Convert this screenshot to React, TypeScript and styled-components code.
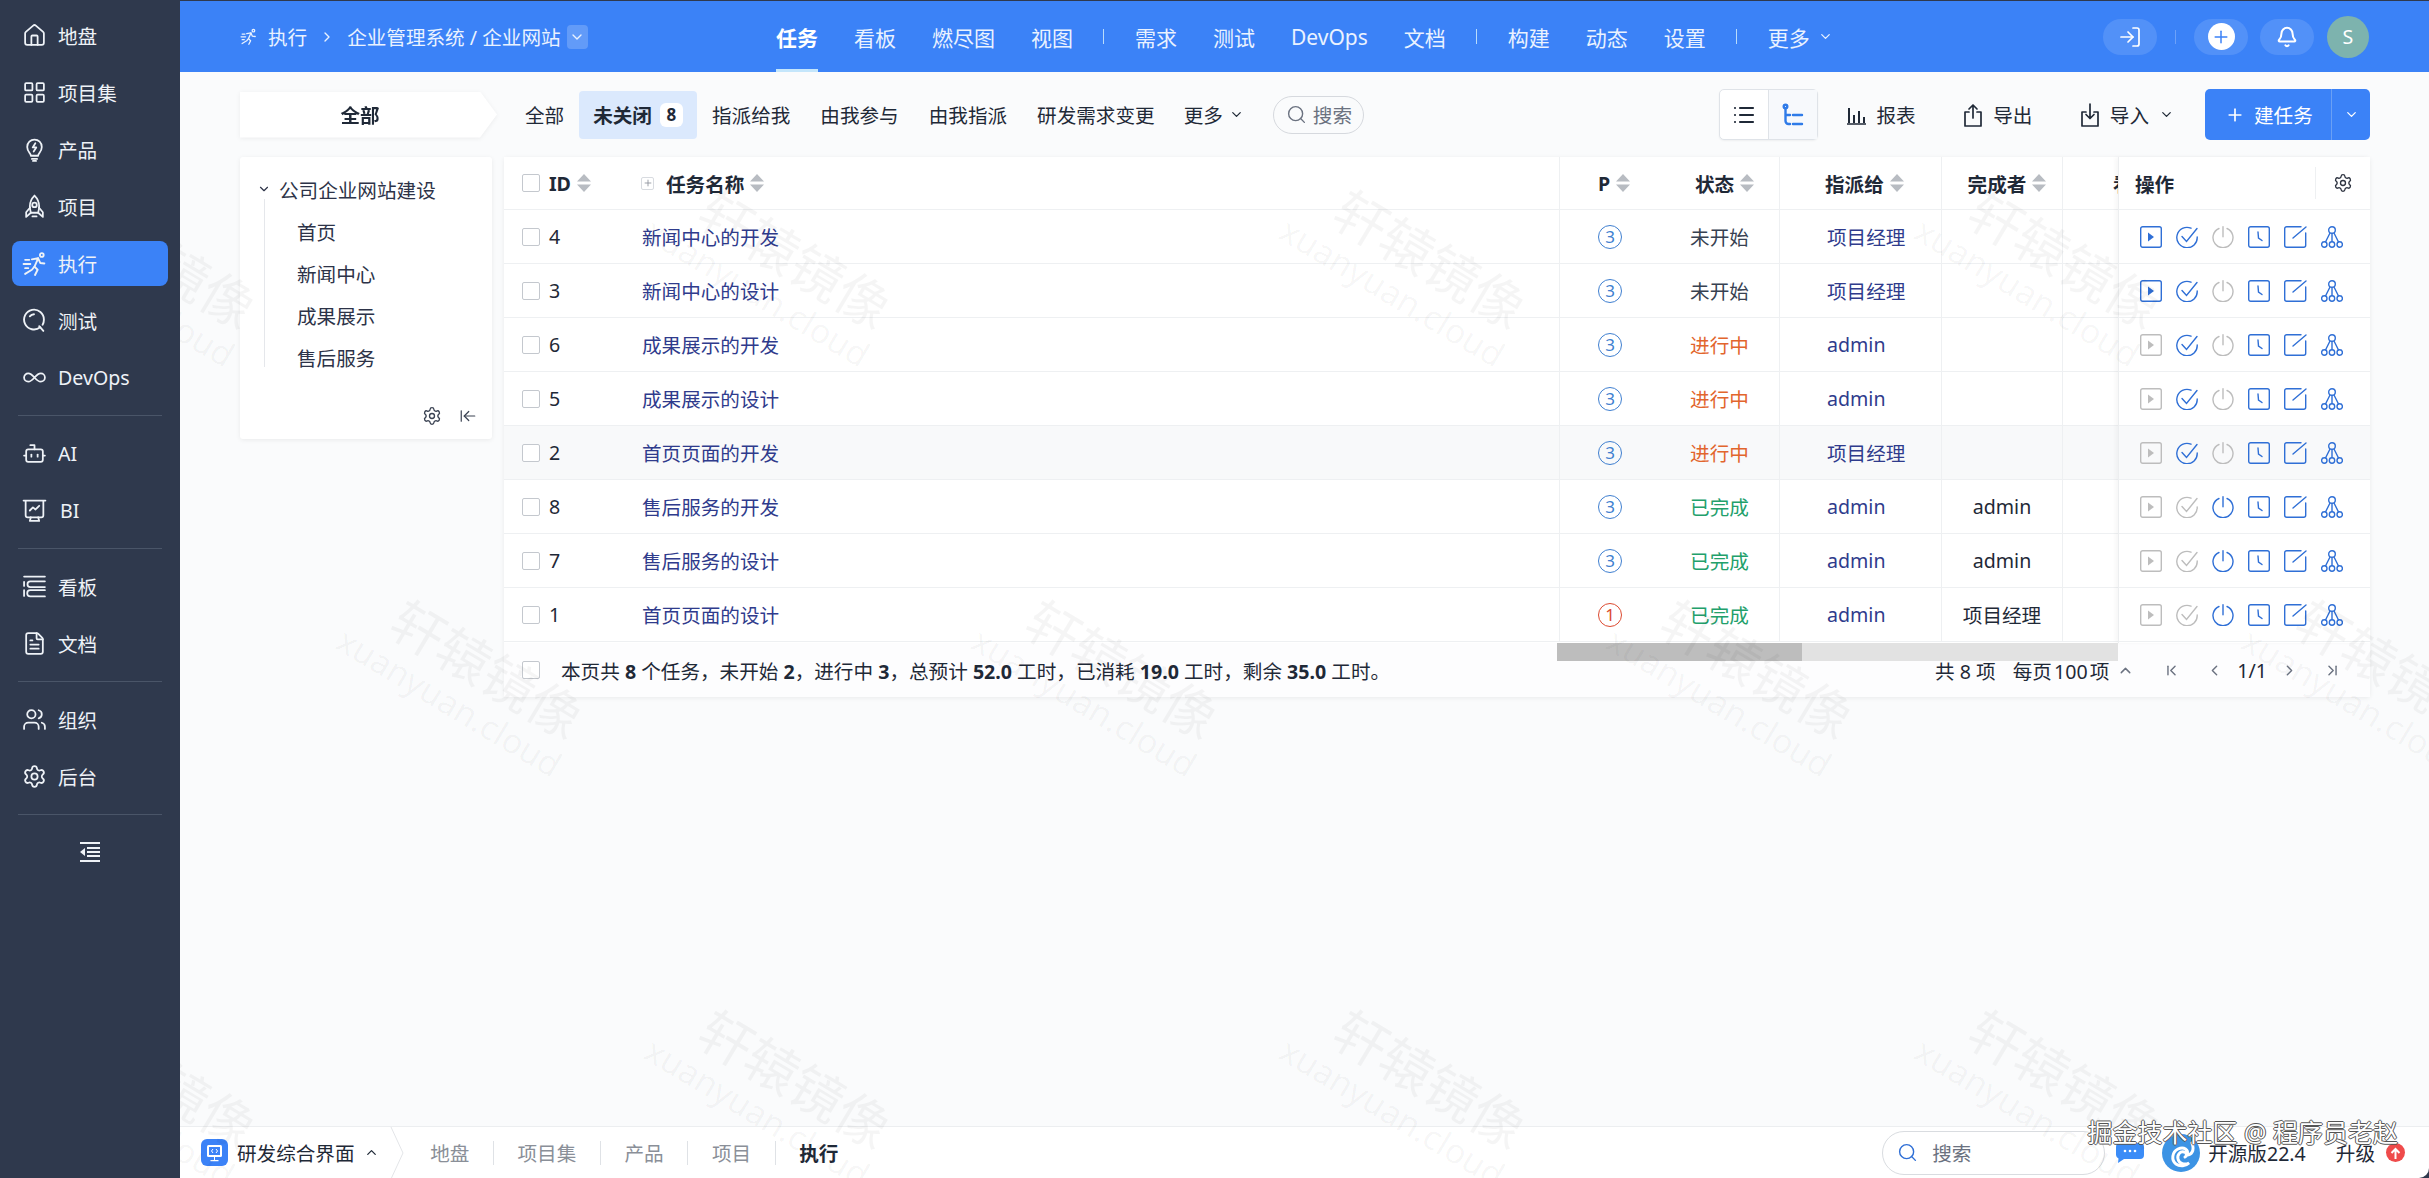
import React from "react";
import styled, { createGlobalStyle } from "styled-components";
import {
  House,
  LayoutGrid,
  Search,
  Infinity as InfinityIcon,
  Bot,
  FileText,
  Users,
  Settings,
  ChevronDown,
  ChevronUp,
  ChevronRight,
  ChevronLeft,
  ChevronFirst,
  ChevronLast,
  Bell,
  LogIn,
  Plus,
  List,
  ArrowLeftToLine,
} from "lucide-react";

const GlobalStyle = createGlobalStyle`
  html, body {
    margin: 0;
    padding: 0;
    background: #2f394d;
  }
  body {
    font-family: "Noto Sans", "Noto Sans CJK SC", sans-serif;
    font-size: 19.6px;
    color: #1f2937;
  }
  * {
    box-sizing: border-box;
  }
`;

const Shell = styled.div`
  display: flex;
  width: 2429px;
  height: 1178px;
  background: #2f394d;
  overflow: hidden;
`;

/* 左侧菜单 */
const Sidebar = styled.nav`
  width: 180px;
  flex: none;
  display: flex;
  flex-direction: column;
  gap: 12px;
  padding: 13px 12px 0;
`;

const MenuItem = styled.div<{ $active?: boolean; $wide?: boolean }>`
  height: 45px;
  display: flex;
  align-items: center;
  gap: ${(p) => (p.$wide ? "13px" : "11px")};
  padding-left: 10px;
  border-radius: 8px;
  color: #eef2f7;
  background: ${(p) => (p.$active ? "#3b82f7" : "transparent")};
  svg {
    flex: none;
  }
`;

const MenuDivider = styled.div`
  height: 1px;
  margin: 3px 6px;
  background: #4a5568;
`;

const Collapse = styled.div`
  height: 36px;
  margin-top: 4px;
  display: flex;
  align-items: center;
  justify-content: center;
  color: #eef2f7;
`;

const Main = styled.div`
  flex: 1;
  min-width: 0;
  display: flex;
  flex-direction: column;
`;

/* 顶部导航 */
const Header = styled.header`
  height: 72px;
  flex: none;
  display: flex;
  align-items: center;
  padding: 0 60px;
  background: #3b82f7;
  border-top: 1px solid #2f394d;
  color: #eaf2ff;
`;

const Crumb = styled.div`
  display: flex;
  align-items: center;
  width: 348px;
  flex: none;
`;

const CrumbText = styled.span<{ $gap: number }>`
  display: flex;
  margin-left: ${(p) => p.$gap}px;
  white-space: nowrap;
`;

const CrumbDrop = styled.span`
  width: 24px;
  height: 24px;
  margin-left: 6px;
  display: flex;
  align-items: center;
  justify-content: center;
  border-radius: 4px;
  background: rgba(255, 255, 255, 0.2);
`;

const Nav = styled.div`
  margin-left: 170px;
  height: 71px;
  display: flex;
  align-items: center;
  font-size: 21px;
`;

const NavItem = styled.div<{ $active?: boolean }>`
  position: relative;
  height: 100%;
  display: flex;
  align-items: center;
  gap: 8px;
  padding: 0 18px;
  white-space: nowrap;
  color: ${(p) => (p.$active ? "#fff" : "#eaf2ff")};
  font-weight: ${(p) => (p.$active ? 700 : 400)};
  &::after {
    content: "";
    display: ${(p) => (p.$active ? "block" : "none")};
    position: absolute;
    left: 18px;
    right: 18px;
    bottom: 0;
    height: 3px;
    background: #c4e6fb;
  }
`;

const NavSep = styled.span`
  width: 1px;
  height: 15px;
  margin: 0 13px 0 12px;
  background: #b9dcfb;
`;

const HeaderRight = styled.div`
  margin-left: auto;
  display: flex;
  align-items: center;
`;

const HeadPill = styled.div`
  width: 54px;
  height: 36px;
  display: flex;
  align-items: center;
  justify-content: center;
  border-radius: 18px;
  background: rgba(255, 255, 255, 0.12);
  color: #fff;
  & + & {
    margin-left: 12px;
  }
`;

const HeadSep = styled.span`
  width: 1px;
  height: 14px;
  margin: 0 18px;
  background: rgba(255, 255, 255, 0.25);
`;

const PlusDot = styled.span`
  width: 27px;
  height: 27px;
  border-radius: 50%;
  display: flex;
  align-items: center;
  justify-content: center;
  background: #fff;
  color: #3b82f7;
`;

const Avatar = styled.div`
  width: 42px;
  height: 42px;
  margin-left: 13px;
  border-radius: 50%;
  display: flex;
  align-items: center;
  justify-content: center;
  background: #7db3ae;
  color: #fff;
`;

const Workspace = styled.div`
  position: relative;
  flex: 1;
  min-height: 0;
  display: flex;
  flex-direction: column;
  overflow: hidden;
  border-bottom-right-radius: 10px;
`;

const Content = styled.main`
  flex: 1;
  min-height: 0;
  padding: 17px 59px 0 60px;
  background: #fafbfc;
`;

/* 工具栏 */
const Toolbar = styled.div`
  height: 51px;
  display: flex;
  align-items: center;
`;

const ModeWrap = styled.div`
  flex: none;
  filter: drop-shadow(0 1px 2px rgba(0, 0, 0, 0.06));
`;

const ModeChip = styled.div`
  width: 257px;
  height: 46px;
  padding-right: 17px;
  display: flex;
  align-items: center;
  justify-content: center;
  font-weight: 700;
  background: #fff;
  clip-path: polygon(0 0, 240px 0, 100% 50%, 240px 100%, 0 100%);
`;

const Tabs = styled.div`
  margin-left: 13px;
  display: flex;
  align-items: center;
`;

const Tab = styled.div<{ $active?: boolean }>`
  height: 48px;
  display: flex;
  align-items: center;
  gap: 8px;
  padding: ${(p) => (p.$active ? "0 14px" : "0 15px")};
  border-radius: 4px;
  white-space: nowrap;
  font-weight: ${(p) => (p.$active ? 700 : 400)};
  background: ${(p) => (p.$active ? "#dbe9fd" : "transparent")};
`;

const TabBadge = styled.span`
  width: 23px;
  height: 24px;
  display: flex;
  align-items: center;
  justify-content: center;
  border-radius: 6px;
  background: #fff;
  font-size: 17px;
`;

const TabMore = styled(Tab)`
  gap: 6px;
  padding: 0 14px;
`;

const SearchPill = styled.div`
  width: 91px;
  height: 38px;
  margin-left: 15px;
  display: flex;
  align-items: center;
  gap: 6px;
  padding-left: 12px;
  border: 1px solid #d6d9de;
  border-radius: 19px;
  color: #6b7280;
`;

const ToolRight = styled.div`
  margin-left: auto;
  display: flex;
  align-items: center;
`;

const Toggle = styled.div`
  width: 99px;
  height: 51px;
  display: flex;
  border: 1px solid #dfe3e8;
  border-radius: 5px;
  background: #fff;
  box-shadow: 0 1px 2px rgba(0, 0, 0, 0.05);
`;

const ToggleCell = styled.div<{ $on?: boolean }>`
  flex: 1;
  display: flex;
  align-items: center;
  justify-content: center;
  color: ${(p) => (p.$on ? "#2f7be8" : "#1f2937")};
  background: ${(p) => (p.$on ? "#f7f9fc" : "transparent")};
  & + & {
    border-left: 1px solid #dfe3e8;
  }
`;

const ToolGroup = styled.div`
  margin-left: 29px;
  display: flex;
  align-items: center;
  gap: 47.5px;
`;

const ToolBtn = styled.div`
  display: flex;
  align-items: center;
  gap: 10px;
  white-space: nowrap;
`;

const Primary = styled.div`
  width: 165px;
  height: 51px;
  margin-left: 31px;
  display: flex;
  border-radius: 5px;
  background: #3b82f7;
  color: #fff;
`;

const PrimaryMain = styled.div`
  width: 127px;
  display: flex;
  align-items: center;
  gap: 9px;
  padding-left: 20px;
  border-right: 1px solid #6aa0f5;
`;

const PrimaryDrop = styled.div`
  flex: 1;
  display: flex;
  align-items: center;
  justify-content: center;
`;

/* 主体 */
const Body = styled.div`
  margin-top: 17px;
  display: flex;
  align-items: flex-start;
  gap: 12px;
`;

const TreePanel = styled.aside`
  width: 252px;
  height: 282px;
  flex: none;
  display: flex;
  flex-direction: column;
  padding: 11px 0 0;
  background: #fff;
  box-shadow: 0 1px 5px rgba(0, 0, 0, 0.07);
  border-radius: 3px;
`;

const TreeTitle = styled.div`
  height: 42px;
  display: flex;
  align-items: center;
  gap: 8px;
  padding-left: 17px;
  color: #2d3348;
  white-space: nowrap;
`;

const TreeChildren = styled.div`
  height: 168px;
  margin: -11px 0 0 24px;
  padding: 11px 0 0 32px;
  border-left: 1px solid #e5e7eb;
`;

const TreeNode = styled.div`
  height: 42px;
  display: flex;
  align-items: center;
  color: #2d3348;
`;

const TreeFoot = styled.div`
  margin-top: auto;
  padding: 0 15px 13px 0;
  display: flex;
  justify-content: flex-end;
  align-items: center;
  gap: 17px;
  color: #3a4252;
`;

const TablePanel = styled.section`
  position: relative;
  flex: 1;
  min-width: 0;
  height: 540px;
  display: flex;
  flex-direction: column;
  background: #fff;
  box-shadow: 0 1px 5px rgba(0, 0, 0, 0.07);
  border-radius: 3px;
`;

const TableBody = styled.div`
  display: flex;
  height: 486px;
`;

const Scroller = styled.div`
  width: 1614px;
  flex: none;
  overflow: hidden;
`;

const columns = "133px 922px 101px 119px 162px 121px 56px";

const Row = styled.div<{ $head?: boolean; $hover?: boolean }>`
  height: ${(p) => (p.$head ? "53px" : "54px")};
  display: grid;
  grid-template-columns: ${columns};
  border-bottom: 1px solid #eef0f2;
  background: ${(p) => (p.$hover ? "#f8f9fa" : "#fff")};
`;

const Cell = styled.div<{ $line?: boolean; $center?: boolean; $pad?: number }>`
  display: flex;
  align-items: center;
  min-width: 0;
  overflow: hidden;
  white-space: nowrap;
  justify-content: ${(p) => (p.$center ? "center" : "flex-start")};
  padding-left: ${(p) => p.$pad ?? 0}px;
  border-left: ${(p) => (p.$line ? "1px solid #eef0f2" : "none")};
`;

const HeadCell = styled(Cell)`
  font-weight: 700;
  gap: 6px;
`;

const Box = styled.span<{ $tight?: boolean }>`
  width: 18px;
  height: 18px;
  flex: none;
  margin-right: ${(p) => (p.$tight ? "3px" : "9px")};
  border: 1px solid #c4c8ce;
  border-radius: 2px;
  background: #fff;
`;

const PlusBox = styled.span`
  width: 13px;
  height: 13px;
  margin-right: 6px;
  display: flex;
  align-items: center;
  justify-content: center;
  border: 1px solid #d8dbe0;
  border-radius: 2px;
  color: #8a8f98;
`;

const Link = styled.span`
  color: #2f3b8c;
`;

const Pri = styled.span<{ $color: string }>`
  width: 24px;
  height: 24px;
  display: flex;
  align-items: center;
  justify-content: center;
  border: 1.5px solid ${(p) => p.$color};
  border-radius: 50%;
  font-size: 17px;
  color: ${(p) => p.$color};
`;

const Status = styled.span<{ $color: string }>`
  color: ${(p) => p.$color};
`;

const Fixed = styled.div`
  flex: 1;
  min-width: 0;
  border-left: 1px solid #eceef0;
  box-shadow: -3px 0 4px rgba(0, 0, 0, 0.03);
  position: relative;
  background: #fff;
`;

const FixedHead = styled.div`
  height: 53px;
  display: flex;
  align-items: center;
  padding-left: 16px;
  font-weight: 700;
  border-bottom: 1px solid #eef0f2;
`;

const FixedGear = styled.span`
  margin-left: auto;
  width: 55px;
  height: 32px;
  display: flex;
  align-items: center;
  justify-content: center;
  border-left: 1px solid #eef0f2;
  color: #2f3542;
`;

const Actions = styled.div<{ $hover?: boolean }>`
  height: 54px;
  display: flex;
  align-items: center;
  gap: 14px;
  padding-left: 21px;
  border-bottom: 1px solid #eef0f2;
  background: ${(p) => (p.$hover ? "#f8f9fa" : "#fff")};
`;

const TableFoot = styled.div`
  flex: 1;
  display: flex;
  align-items: center;
  padding: 0 0 0 18px;
  background: #fdfdfe;
`;

const FootText = styled.div`
  margin-left: 12px;
  white-space: pre;
  b {
    font-weight: 700;
  }
`;

const Pager = styled.div`
  margin-left: auto;
  display: flex;
  align-items: center;
  padding-right: 29px;
  white-space: pre;
  svg {
    color: #6b7280;
  }
`;

const PageSize = styled.span`
  word-spacing: -3px;
`;

const PagerGap = styled.span<{ $w: number }>`
  display: inline-block;
  width: ${(p) => p.$w}px;
`;

const Track = styled.div`
  position: absolute;
  left: 1053px;
  top: 486px;
  width: 561px;
  height: 18px;
  background: #e2e2e2;
`;

const Thumb = styled.div`
  width: 245px;
  height: 100%;
  background: #bdbdbd;
`;

/* 底部 */
const BottomBar = styled.footer`
  height: 52px;
  flex: none;
  display: flex;
  align-items: center;
  padding: 0 24px 0 21px;
  background: #fff;
  border-top: 1px solid #eceef0;
`;

const AppName = styled.div`
  display: flex;
  align-items: center;
  gap: 9px;
  white-space: nowrap;
`;

const AppArrow = styled.svg`
  flex: none;
  margin: 0 3px 0 11px;
`;

const BarCrumb = styled.div<{ $active?: boolean; $last?: boolean }>`
  height: 24px;
  display: flex;
  align-items: center;
  padding: 0 23.6px;
  white-space: nowrap;
  color: ${(p) => (p.$active ? "#1f2937" : "#8a8f98")};
  font-weight: ${(p) => (p.$active ? 700 : 400)};
  border-right: ${(p) => (p.$last ? "none" : "1px solid #dfe2e6")};
`;

const BarRight = styled.div`
  margin-left: auto;
  display: flex;
  align-items: center;
`;

const BarSearch = styled.div`
  width: 223px;
  height: 44px;
  display: flex;
  align-items: center;
  gap: 14px;
  padding-left: 14px;
  border: 1px solid #d9dce0;
  border-radius: 22px;
  color: #6b7280;
  margin-right: 11px;
`;

const Version = styled.span`
  margin: 0 30px 0 8px;
  white-space: nowrap;
`;

const LogoGap = styled.span`
  width: 18px;
`;

const UpDot = styled.span`
  width: 19px;
  height: 19px;
  margin-left: 11px;
  display: flex;
  align-items: center;
  justify-content: center;
  border-radius: 50%;
  background: #ef4b4b;
`;

const Credit = styled.div`
  position: absolute;
  right: 31px;
  bottom: 30px;
  z-index: 6;
  font-size: 25px;
  line-height: 32px;
  white-space: pre;
  color: #fff;
  text-shadow: 1px 0 #555, -1px 0 #555, 0 1px #555, 0 -1px #555;
`;

/* 水印 */
const Watermarks = styled.div`
  position: absolute;
  inset: 0;
  z-index: 5;
  overflow: hidden;
  pointer-events: none;
`;

const Mark = styled.div<{ $x: number; $y: number }>`
  position: absolute;
  left: ${(p) => p.$x - 200}px;
  top: ${(p) => p.$y - 60}px;
  width: 400px;
  height: 120px;
  display: flex;
  flex-direction: column;
  align-items: center;
  justify-content: center;
  transform: rotate(31deg);
  color: rgba(0, 0, 0, 0.04);
`;

const MarkMain = styled.span`
  font-size: 53px;
  line-height: 66px;
`;

const MarkSub = styled.span`
  font-size: 34px;
  line-height: 40px;
  margin-top: -6px;
  margin-left: -30px;
`;

type IconProps = { size?: number; color?: string };

const RunIcon = ({ size = 24, color = "currentColor" }: IconProps) => (
  <svg width={size} height={size} viewBox="0 0 24 24" fill="none" stroke={color} strokeWidth="1.8" strokeLinecap="round" strokeLinejoin="round">
    <circle cx="19" cy="3.800" r="1.800" />
    <path d="M9.500 8l6-1-3.500 8 3 3-2.500 5" />
    <path d="M15.500 7l2 4.500 4 .5" />
    <path d="M12 15l-2.500 3-6.500 4" />
    <path d="M3 8.500h4M1.500 12.500H8M3 16.500h3" />
  </svg>
);

const BulbIcon = ({ size = 24 }: IconProps) => (
  <svg width={size} height={size} viewBox="0 0 24 24" fill="none" stroke="currentColor" strokeWidth="1.7" strokeLinecap="round" strokeLinejoin="round">
    <path d="M8.500 18c0-2-3.500-4-3.500-8.500a7 7 0 0 1 14 0c0 4.500-3.500 6.500-3.500 8.500z" />
    <path d="M9.500 21h5M10.500 23h3" />
    <path d="M12.800 6l-2.500 4h3.400l-2.500 4" />
  </svg>
);

const RocketIcon = ({ size = 24 }: IconProps) => (
  <svg width={size} height={size} viewBox="0 0 24 24" fill="none" stroke="currentColor" strokeWidth="1.7" strokeLinecap="round" strokeLinejoin="round">
    <path d="M12 1.500c-3 3-4.500 6.500-4.500 10.500 0 2 .5 4 1 6h7c.5-2 1-4 1-6 0-4-1.500-7.500-4.500-10.500z" />
    <circle cx="12" cy="10.500" r="2.200" />
    <path d="M7.800 13L4 17.500V22l4.500-4M16.200 13l3.800 4.500V22l-4.500-4M10 21.500h4" />
  </svg>
);

const KanbanIcon = ({ size = 24 }: IconProps) => (
  <svg width={size} height={size} viewBox="0 0 24 24" fill="none" stroke="currentColor" strokeWidth="1.7" strokeLinecap="round">
    <path d="M2 2.500h20M22 7h-14a2.500 2.500 0 0 0 0 5.500h14M22 15.500H8a2.500 2.500 0 0 0 0 6h14" />
    <path d="M2 7.500v4M2 15.500v5.500" />
  </svg>
);

const TestIcon = ({ size = 24 }: IconProps) => (
  <svg width={size} height={size} viewBox="0 0 24 24" fill="none" stroke="currentColor" strokeWidth="1.8" strokeLinecap="round">
    <path d="M17.500 18.500A9.500 9.500 0 1 1 21 11.500c0 1.700-.4 3.200-1.200 4.500" />
    <path d="M16.500 17.500l4 4.500M11.500 6A5.500 5.500 0 0 0 7.500 8" />
  </svg>
);

const BoardIcon = ({ size = 24 }: IconProps) => (
  <svg width={size} height={size} viewBox="0 0 24 24" fill="none" stroke="currentColor" strokeWidth="1.7" strokeLinecap="round" strokeLinejoin="round">
    <path d="M1.500 2.500h21M3.500 2.500v14a2 2 0 0 0 2 2h13a2 2 0 0 0 2-2v-14" />
    <path d="M7.500 12l3-3 2.500 2 3.500-3.500M8.500 18.500l-1 3.500h9l-1-3.500" />
  </svg>
);

const CollapseIcon = () => (
  <svg width="20" height="20" viewBox="0 0 20 20" fill="currentColor">
    <path d="M0 0h20v2H0zM7 5h13v2H7zM7 9h13v2H7zM7 13h13v2H7zM0 18h20v2H0zM5 6v8l-5-4z" />
  </svg>
);

const SortIcon = () => (
  <svg width="14" height="18" viewBox="0 0 14 18" fill="#b8bcc2">
    <path d="M7 0l7 7.500H0zM7 18L0 10.500h14z" />
  </svg>
);

const BarsIcon = () => (
  <svg width="19" height="20" viewBox="0 0 19 20" fill="none" stroke="#1f2937" strokeWidth="2">
    <path d="M2 3v15M7 10v8M12 6v12M17 12v6" />
    <path d="M0 19h19" strokeWidth="1.500" />
  </svg>
);

const TrayIcon = ({ down }: { down?: boolean }) => (
  <svg width="20" height="24" viewBox="0 0 20 24" fill="none" stroke="#1f2937" strokeWidth="1.700" strokeLinecap="round" strokeLinejoin="round">
    <path d="M6 9H2v14h16V9h-4" />
    {down ? <path d="M10 1v14M6 11.500l4 4 4-4" /> : <path d="M10 15V2M6 6l4-4 4 4" />}
  </svg>
);

const TreeViewIcon = () => (
  <svg width="22" height="24" viewBox="0 0 22 24" fill="none" stroke="#2f7be8" strokeWidth="2.400" strokeLinecap="round">
    <circle cx="3.500" cy="3.500" r="1.800" />
    <path d="M3.500 6v12a3 3 0 0 0 3 3H8M3.500 12H8M11 12h9M11 21h9" />
  </svg>
);

const blue = "#2f6fd6";
const grey = "#bdbdbd";

const PlayAct = ({ color }: { color: string }) => (
  <svg width="22" height="22" viewBox="0 0 22 22" fill="none" stroke={color} strokeWidth="1.400">
    <rect x="0.700" y="0.700" width="20.600" height="20.600" rx="2" />
    <path d="M8 6.500l6 4.500-6 4.500z" fill={color} stroke="none" />
  </svg>
);

const CheckAct = ({ color }: { color: string }) => (
  <svg width="22" height="22" viewBox="0 0 22 22" fill="none" stroke={color} strokeWidth="1.400" strokeLinecap="round">
    <path d="M15 2.200A10.200 10.200 0 1 0 21.200 11" />
    <path d="M6 10.500l4.500 5L21 2.500" />
  </svg>
);

const PowerAct = ({ color }: { color: string }) => (
  <svg width="22" height="22" viewBox="0 0 22 22" fill="none" stroke={color} strokeWidth="1.400" strokeLinecap="round">
    <path d="M7 2.500a10 10 0 1 0 8 0" />
    <path d="M11 .7v10" />
  </svg>
);

const ClockAct = () => (
  <svg width="22" height="22" viewBox="0 0 22 22" fill="none" stroke={blue} strokeWidth="1.400" strokeLinecap="round">
    <rect x="0.700" y="0.700" width="20.600" height="20.600" rx="2" />
    <path d="M10 6l.5 6 3.500 2.500" />
  </svg>
);

const EditAct = () => (
  <svg width="23" height="22" viewBox="0 0 23 22" fill="none" stroke={blue} strokeWidth="1.400" strokeLinecap="round">
    <path d="M17 .7H2.700a2 2 0 0 0-2 2v16.600a2 2 0 0 0 2 2h17a2 2 0 0 0 2-2V7" />
    <path d="M9 12L22 1" />
  </svg>
);

const TreeAct = () => (
  <svg width="22" height="22" viewBox="0 0 22 22" fill="none" stroke={blue} strokeWidth="1.400">
    <circle cx="11" cy="4" r="3.300" />
    <circle cx="3.300" cy="18.500" r="2.700" />
    <circle cx="11" cy="18.500" r="2.700" />
    <circle cx="18.700" cy="18.500" r="2.700" />
    <path d="M11 7.300v8.500M9 7l-4.500 9M13 7l4.500 9" />
  </svg>
);

const MonitorLogo = () => (
  <svg width="27" height="27" viewBox="0 0 27 27">
    <rect width="27" height="27" rx="6" fill="#3b82f7" />
    <rect x="6" y="6" width="15" height="12" rx="1.500" fill="#fff" />
    <rect x="8" y="8" width="11" height="8" fill="#3b82f7" />
    <path d="M12 10l-1.500 2 1.500 2M15 10l1.500 2-1.500 2" stroke="#fff" fill="none" />
    <path d="M13 18h1v3h-1zM9.500 21h8v1.200h-8z" fill="#fff" />
  </svg>
);

const ChatIcon = () => (
  <svg width="28" height="20" viewBox="0 0 28 20">
    <path d="M4 0h20a4 4 0 0 1 4 4v8a4 4 0 0 1-4 4H8l-6 4 .5-4.500A4 4 0 0 1 0 12V4a4 4 0 0 1 4-4z" fill="#3b8cf7" />
    <circle cx="9" cy="8" r="1.300" fill="#fff" />
    <circle cx="14" cy="8" r="1.300" fill="#fff" />
    <circle cx="19" cy="8" r="1.300" fill="#fff" />
  </svg>
);

const SwirlLogo = () => (
  <svg width="38" height="38" viewBox="0 0 38 38">
    <circle cx="19" cy="19" r="19" fill="#3c93e4" />
    <path d="M30 9c3 8-1 12-5 12 2-5-3-9-9-6-6 3-7 11-2 15 4 3 10 2 13-1-4 2-10 1-11-4-1-4 2-8 6-7 3 .5 3 4 1 5" fill="none" stroke="#fff" strokeWidth="3" strokeLinecap="round" />
  </svg>
);

const Gear = () => <Settings size={20} strokeWidth={1.6} />;

type Task = {
  id: number;
  name: string;
  pri: number;
  status: "未开始" | "进行中" | "已完成";
  to: string;
  by: string;
};

const tasks: Task[] = [
  { id: 4, name: "新闻中心的开发", pri: 3, status: "未开始", to: "项目经理", by: "" },
  { id: 3, name: "新闻中心的设计", pri: 3, status: "未开始", to: "项目经理", by: "" },
  { id: 6, name: "成果展示的开发", pri: 3, status: "进行中", to: "admin", by: "" },
  { id: 5, name: "成果展示的设计", pri: 3, status: "进行中", to: "admin", by: "" },
  { id: 2, name: "首页页面的开发", pri: 3, status: "进行中", to: "项目经理", by: "" },
  { id: 8, name: "售后服务的开发", pri: 3, status: "已完成", to: "admin", by: "admin" },
  { id: 7, name: "售后服务的设计", pri: 3, status: "已完成", to: "admin", by: "admin" },
  { id: 1, name: "首页页面的设计", pri: 1, status: "已完成", to: "admin", by: "项目经理" },
];

const statusColor = { 未开始: "#374151", 进行中: "#e2652d", 已完成: "#22a06b" };

const marks: { x: number; y: number }[] = [];
[
  { y: 274, start: 151 },
  { y: 684, start: -157 },
  { y: 1094, start: 151 },
].forEach((row) => {
  for (let i = 0; i < 5; i++) {
    marks.push({ x: row.start + i * 635 - 180, y: row.y - 72 });
  }
});

const App = () => {
  return (
    <Shell>
      <GlobalStyle />
      <Sidebar>
        <MenuItem><House size={25} strokeWidth={1.7} />地盘</MenuItem>
        <MenuItem><LayoutGrid size={25} strokeWidth={1.7} />项目集</MenuItem>
        <MenuItem><BulbIcon size={25} />产品</MenuItem>
        <MenuItem><RocketIcon size={25} />项目</MenuItem>
        <MenuItem $active><RunIcon size={25} />执行</MenuItem>
        <MenuItem><TestIcon size={25} />测试</MenuItem>
        <MenuItem><InfinityIcon size={25} strokeWidth={1.7} />DevOps</MenuItem>
        <MenuDivider />
        <MenuItem><Bot size={25} strokeWidth={1.7} />AI</MenuItem>
        <MenuItem $wide><BoardIcon size={25} />BI</MenuItem>
        <MenuDivider />
        <MenuItem><KanbanIcon size={25} />看板</MenuItem>
        <MenuItem><FileText size={25} strokeWidth={1.7} />文档</MenuItem>
        <MenuDivider />
        <MenuItem><Users size={25} strokeWidth={1.7} />组织</MenuItem>
        <MenuItem><Settings size={25} strokeWidth={1.7} />后台</MenuItem>
        <MenuDivider />
        <Collapse><CollapseIcon /></Collapse>
      </Sidebar>

      <Main>
        <Header>
          <Crumb>
            <RunIcon size={19} />
            <CrumbText $gap={11}>执行</CrumbText>
            <CrumbText $gap={12}><ChevronRight size={16} /></CrumbText>
            <CrumbText $gap={12}>企业管理系统 / 企业网站</CrumbText>
            <CrumbDrop><ChevronDown size={16} /></CrumbDrop>
          </Crumb>
          <Nav>
            <NavItem $active>任务</NavItem>
            <NavItem>看板</NavItem>
            <NavItem>燃尽图</NavItem>
            <NavItem>视图</NavItem>
            <NavSep />
            <NavItem>需求</NavItem>
            <NavItem>测试</NavItem>
            <NavItem>DevOps</NavItem>
            <NavItem>文档</NavItem>
            <NavSep />
            <NavItem>构建</NavItem>
            <NavItem>动态</NavItem>
            <NavItem>设置</NavItem>
            <NavSep />
            <NavItem>更多<ChevronDown size={15} /></NavItem>
          </Nav>
          <HeaderRight>
            <HeadPill><LogIn size={24} strokeWidth={1.7} /></HeadPill>
            <HeadSep />
            <HeadPill><PlusDot><Plus size={20} strokeWidth={1.8} /></PlusDot></HeadPill>
            <HeadPill><Bell size={22} strokeWidth={2.2} /></HeadPill>
            <Avatar>S</Avatar>
          </HeaderRight>
        </Header>

        <Workspace>
          <Content>
            <Toolbar>
              <ModeWrap><ModeChip>全部</ModeChip></ModeWrap>
              <Tabs>
                <Tab>全部</Tab>
                <Tab $active>未关闭<TabBadge>8</TabBadge></Tab>
                <Tab>指派给我</Tab>
                <Tab>由我参与</Tab>
                <Tab>由我指派</Tab>
                <Tab>研发需求变更</Tab>
                <TabMore>更多<ChevronDown size={15} /></TabMore>
              </Tabs>
              <SearchPill><Search size={21} strokeWidth={1.6} />搜索</SearchPill>
              <ToolRight>
                <Toggle>
                  <ToggleCell><List size={24} strokeWidth={2.2} /></ToggleCell>
                  <ToggleCell $on><TreeViewIcon /></ToggleCell>
                </Toggle>
                <ToolGroup>
                  <ToolBtn><BarsIcon />报表</ToolBtn>
                  <ToolBtn><TrayIcon />导出</ToolBtn>
                  <ToolBtn><TrayIcon down />导入<ChevronDown size={15} /></ToolBtn>
                </ToolGroup>
                <Primary>
                  <PrimaryMain><Plus size={20} strokeWidth={2} />建任务</PrimaryMain>
                  <PrimaryDrop><ChevronDown size={15} /></PrimaryDrop>
                </Primary>
              </ToolRight>
            </Toolbar>

            <Body>
              <TreePanel>
                <TreeTitle><ChevronDown size={14} />公司企业网站建设</TreeTitle>
                <TreeChildren>
                  <TreeNode>首页</TreeNode>
                  <TreeNode>新闻中心</TreeNode>
                  <TreeNode>成果展示</TreeNode>
                  <TreeNode>售后服务</TreeNode>
                </TreeChildren>
                <TreeFoot>
                  <Gear />
                  <ArrowLeftToLine size={18} strokeWidth={1.6} />
                </TreeFoot>
              </TreePanel>

              <TablePanel>
                <TableBody>
                  <Scroller>
                    <Row $head>
                      <HeadCell $pad={18}><Box $tight />ID<SortIcon /></HeadCell>
                      <HeadCell $pad={4}><PlusBox><Plus size={10} /></PlusBox>任务名称<SortIcon /></HeadCell>
                      <HeadCell $line $center $pad={8}>P<SortIcon /></HeadCell>
                      <HeadCell $center $pad={10}>状态<SortIcon /></HeadCell>
                      <HeadCell $line $pad={45}>指派给<SortIcon /></HeadCell>
                      <HeadCell $line $center $pad={10}>完成者<SortIcon /></HeadCell>
                      <HeadCell $line $pad={50}>看板</HeadCell>
                    </Row>
                    {tasks.map((task) => (
                      <Row key={task.id} $hover={task.id === 2}>
                        <Cell $pad={18}><Box />{task.id}</Cell>
                        <Cell $pad={5}><Link>{task.name}</Link></Cell>
                        <Cell $line $center>
                          <Pri $color={task.pri === 1 ? "#dc4a30" : "#3f7fd0"}>{task.pri}</Pri>
                        </Cell>
                        <Cell $center><Status $color={statusColor[task.status]}>{task.status}</Status></Cell>
                        <Cell $line $pad={47}><Link>{task.to}</Link></Cell>
                        <Cell $line $center>{task.by}</Cell>
                        <Cell $line />
                      </Row>
                    ))}
                  </Scroller>
                  <Fixed>
                    <FixedHead>操作<FixedGear><Gear /></FixedGear></FixedHead>
                    {tasks.map((task) => {
                      const done = task.status === "已完成";
                      const waiting = task.status === "未开始";
                      return (
                        <Actions key={task.id} $hover={task.id === 2}>
                          <PlayAct color={waiting ? blue : grey} />
                          <CheckAct color={done ? grey : blue} />
                          <PowerAct color={done ? blue : grey} />
                          <ClockAct />
                          <EditAct />
                          <TreeAct />
                        </Actions>
                      );
                    })}
                  </Fixed>
                </TableBody>
                <Track><Thumb /></Track>
                <TableFoot>
                  <Box />
                  <FootText>
                    本页共 <b>8</b> 个任务，未开始 <b>2</b>，进行中 <b>3</b>，总预计 <b>52.0</b> 工时，已消耗 <b>19.0</b> 工时，剩余 <b>35.0</b> 工时。
                  </FootText>
                  <Pager>
                    <span>共 8 项</span><PagerGap $w={17} /><PageSize>每页 100 项</PageSize><PagerGap $w={8} /><ChevronUp size={17} />
                    <PagerGap $w={29} /><ChevronFirst size={17} />
                    <PagerGap $w={26} /><ChevronLeft size={17} />
                    <PagerGap $w={14} /><span>1/1</span>
                    <PagerGap $w={14} /><ChevronRight size={17} />
                    <PagerGap $w={26} /><ChevronLast size={17} />
                  </Pager>
                </TableFoot>
              </TablePanel>
            </Body>
          </Content>

          <BottomBar>
            <AppName>
              <MonitorLogo />
              研发综合界面
              <ChevronUp size={15} />
            </AppName>
            <AppArrow width="14" height="52" viewBox="0 0 14 52" fill="none" stroke="#e3e5e8">
              <path d="M1 0l12 26L1 52" />
            </AppArrow>
            <BarCrumb>地盘</BarCrumb>
            <BarCrumb>项目集</BarCrumb>
            <BarCrumb>产品</BarCrumb>
            <BarCrumb>项目</BarCrumb>
            <BarCrumb $active $last>执行</BarCrumb>
            <BarRight>
              <BarSearch><Search size={21} strokeWidth={1.6} color="#2f6fd6" />搜索</BarSearch>
              <ChatIcon />
              <LogoGap />
              <SwirlLogo />
              <Version>开源版22.4</Version>
              升级
              <UpDot>
                <svg width="11" height="12" viewBox="0 0 11 12" fill="none" stroke="#fff" strokeWidth="2">
                  <path d="M5.500 12V2M1.500 6l4-4 4 4" />
                </svg>
              </UpDot>
            </BarRight>
          </BottomBar>

          <Watermarks>
            {marks.map((m) => (
              <Mark key={`${m.x}-${m.y}`} $x={m.x} $y={m.y}>
                <MarkMain>轩辕镜像</MarkMain>
                <MarkSub>xuanyuan.cloud</MarkSub>
              </Mark>
            ))}
          </Watermarks>
          <Credit>掘金技术社区 @ 程序员老赵</Credit>
        </Workspace>
      </Main>
    </Shell>
  );
};

export default App;
